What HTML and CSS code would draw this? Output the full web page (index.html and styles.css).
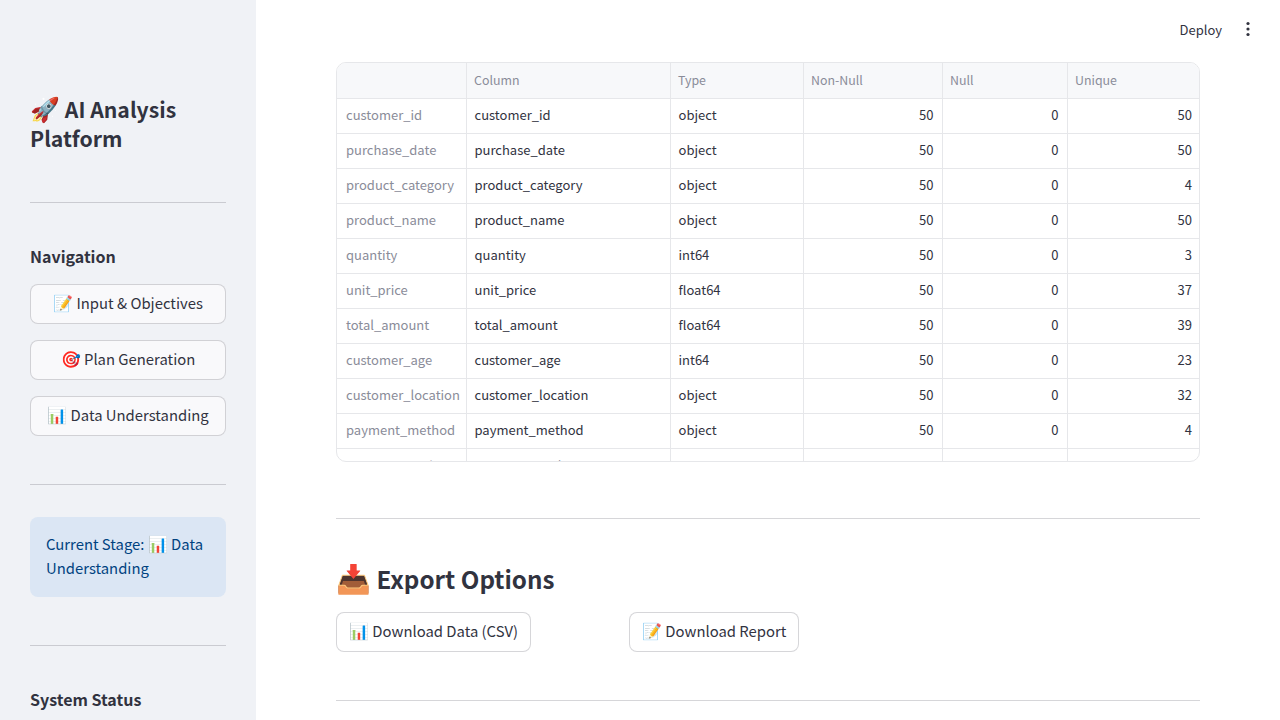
FILE: index.html
```html
<!DOCTYPE html>
<html lang="en">
<head>
<meta charset="utf-8">
<title>AI Analysis Platform</title>
<link rel="stylesheet" href="styles.css">
</head>
<body>
<div class="app">
  <aside class="sidebar">
    <h1 class="brand"><span class="emoji">🚀</span> AI Analysis Platform</h1>
    <hr class="rule rule-brand">
    <h3 class="side-heading">Navigation</h3>
    <div class="nav">
      <button class="btn btn-wide"><span class="emoji">📝</span> Input &amp; Objectives</button>
      <button class="btn btn-wide"><span class="emoji">🎯</span> Plan Generation</button>
      <button class="btn btn-wide"><span class="emoji">📊</span> Data Understanding</button>
    </div>
    <hr class="rule rule-nav">
    <div class="stage">Current Stage: <span class="emoji">📊</span> Data Understanding</div>
    <hr class="rule rule-stage">
    <h3 class="side-heading">System Status</h3>
  </aside>
  <main class="main">
    <header class="topbar">
      <span class="deploy">Deploy</span>
      <svg class="kebab" width="16" height="16" viewBox="0 0 16 16" aria-hidden="true"><circle cx="8" cy="2.5" r="1.6"/><circle cx="8" cy="8" r="1.6"/><circle cx="8" cy="13.5" r="1.6"/></svg>
    </header>
    <div class="table-wrap">
      <table class="table">
        <colgroup><col class="c0"><col class="c1"><col class="c2"><col class="c3"><col class="c4"><col class="c5"></colgroup>
        <thead><tr><th></th><th>Column</th><th>Type</th><th>Non-Null</th><th>Null</th><th>Unique</th></tr></thead>
        <tbody>
          <tr><th>customer_id</th><td>customer_id</td><td>object</td><td class="n">50</td><td class="n">0</td><td class="n">50</td></tr>
          <tr><th>purchase_date</th><td>purchase_date</td><td>object</td><td class="n">50</td><td class="n">0</td><td class="n">50</td></tr>
          <tr><th>product_category</th><td>product_category</td><td>object</td><td class="n">50</td><td class="n">0</td><td class="n">4</td></tr>
          <tr><th>product_name</th><td>product_name</td><td>object</td><td class="n">50</td><td class="n">0</td><td class="n">50</td></tr>
          <tr><th>quantity</th><td>quantity</td><td>int64</td><td class="n">50</td><td class="n">0</td><td class="n">3</td></tr>
          <tr><th>unit_price</th><td>unit_price</td><td>float64</td><td class="n">50</td><td class="n">0</td><td class="n">37</td></tr>
          <tr><th>total_amount</th><td>total_amount</td><td>float64</td><td class="n">50</td><td class="n">0</td><td class="n">39</td></tr>
          <tr><th>customer_age</th><td>customer_age</td><td>int64</td><td class="n">50</td><td class="n">0</td><td class="n">23</td></tr>
          <tr><th>customer_location</th><td>customer_location</td><td>object</td><td class="n">50</td><td class="n">0</td><td class="n">32</td></tr>
          <tr><th>payment_method</th><td>payment_method</td><td>object</td><td class="n">50</td><td class="n">0</td><td class="n">4</td></tr>
          <tr class="row-clipped"><th>discount_applied</th><td>discount_applied</td><td>float64</td><td class="n">50</td><td class="n">0</td><td class="n">2</td></tr>
        </tbody>
      </table>
    </div>
    <hr class="rule rule-table">
    <h2 class="section"><span class="emoji">📥</span> Export Options</h2>
    <div class="exports">
      <div class="export-cell"><button class="btn"><span class="emoji">📊</span> Download Data (CSV)</button></div>
      <div class="export-cell"><button class="btn"><span class="emoji">📝</span> Download Report</button></div>
    </div>
    <hr class="rule rule-export">
  </main>
</div>
</body>
</html>
```
FILE: styles.css
```css
* { box-sizing: border-box; }
html, body { margin: 0; height: 100%; overflow: hidden; }
body {
  font-family: "Noto Sans CJK SC", "Noto Sans", sans-serif;
  color: #31333f;
  background: #fff;
  font-size: 14.85px;
}
.app { display: flex; height: 720px; overflow: hidden; }
.sidebar {
  width: 256px;
  flex: none;
  height: 720px;
  overflow: hidden;
  background: #f0f2f6;
  padding: 94px 30px 0;
}
.brand { margin: 0; font-size: 21.2px; line-height: 28.8px; font-weight: 600; }
.brand .emoji { font-size: 24px; }
.rule { border: 0; border-top: 1px solid rgba(49, 51, 63, 0.2); margin: 0; }
.rule-brand { margin-top: 49px; }
.side-heading { margin: 0; font-size: 16px; line-height: 24px; font-weight: 600; }
.rule-brand + .side-heading { margin-top: 41px; }
.nav { display: flex; flex-direction: column; gap: 16px; margin-top: 16px; }
.btn {
  font: inherit;
  color: inherit;
  height: 40px;
  padding: 0 12px 4px;
  background: #fff;
  border: 1px solid rgba(49, 51, 63, 0.2);
  border-radius: 8px;
  white-space: nowrap;
}
.btn .emoji, .stage .emoji { font-size: 16px; }
.btn-wide { width: 100%; background: #f9f9fb; }
.rule-nav { margin-top: 48px; }
.stage {
  margin-top: 32px;
  height: 80px;
  padding: 14px 16px;
  border-radius: 8px;
  background: #dbe6f4;
  color: #004280;
  line-height: 24px;
}
.rule-stage { margin-top: 48px; }
.rule-stage + .side-heading { margin-top: 41px; }
.main { flex: 1; min-width: 0; padding: 0 80px; }
.topbar {
  height: 62px;
  margin-right: -56px;
  padding-bottom: 4px;
  display: flex;
  align-items: center;
  justify-content: flex-end;
  gap: 18px;
}
.deploy { font-size: 13px; }
.kebab { fill: #31333f; display: block; }
.table-wrap {
  height: 400px;
  overflow: hidden;
  border: 1px solid #e6e7ea;
  border-radius: 10px;
}
.table {
  width: 863px;
  table-layout: fixed;
  border-collapse: collapse;
  font-size: 13px;
}
.c0 { width: 129px; }
.c1 { width: 204px; }
.c2 { width: 133px; }
.c3 { width: 139px; }
.c4 { width: 125px; }
.c5 { width: 133px; }
.table th, .table td {
  height: 35px;
  padding: 0 8px 2px;
  border-right: 1px solid #e6e7ea;
  border-bottom: 1px solid #e6e7ea;
  font-weight: 400;
  text-align: left;
  white-space: nowrap;
  overflow: hidden;
}
.table tr > *:last-child { border-right: 0; }
.table thead th { background: #f7f8fa; color: #8a8c99; font-size: 12.4px; padding: 0 7.5px; }
.table tbody th { color: #8a8c99; padding-left: 9px; padding-right: 0; }
.table td.n { text-align: right; }
.table .row-clipped th, .table .row-clipped td { padding-bottom: 0; }
.rule-table { margin-top: 56px; }
.section { margin: 40px 0 0; font-size: 24.2px; line-height: 36px; font-weight: 600; }
.section .emoji { font-size: 28px; }
.exports { display: flex; gap: 16px; margin-top: 15px; }
.export-cell { width: 277px; }
.rule-export { margin-top: 48px; }
```
